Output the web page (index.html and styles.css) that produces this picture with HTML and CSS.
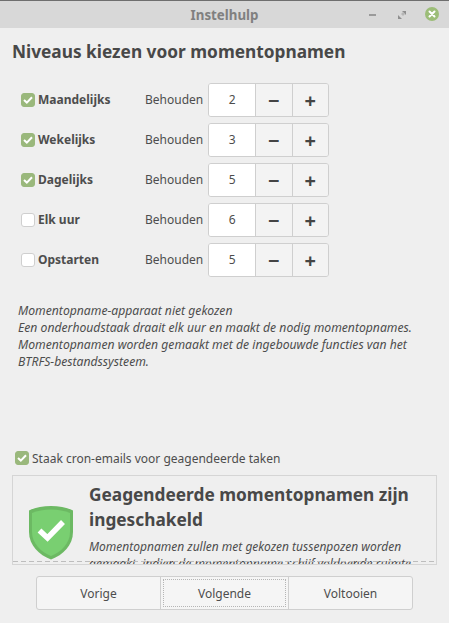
FILE: index.html
```html
<!DOCTYPE html>
<html lang="nl">
<head>
<meta charset="utf-8">
<title>Instelhulp</title>
<link rel="stylesheet" href="styles.css">
</head>
<body>
<div class="window">
  <header class="titlebar">
    <span class="title">Instelhulp</span>
    <svg class="wm wm-min" width="8" height="4" viewBox="0 0 8 4"><rect x="0" y="1" width="7" height="2" fill="#9a9a9a"/></svg>
    <svg class="wm wm-max" width="8" height="8" viewBox="0 0 8 8"><path d="M4 0h4v4zM0 4l4 4H0z" fill="#8f8f8f"/><path d="M3 3L5 1l2 2-2 2z" fill="#b5b5b5"/></svg>
    <svg class="wm wm-close" width="14" height="14" viewBox="0 0 14 14"><circle cx="7" cy="7" r="7" fill="#9cbd78"/><path d="M4.500 4.500l5 5M9.500 4.500l-5 5" stroke="#fff" stroke-width="2" stroke-linecap="round"/></svg>
  </header>
  <main class="content">
    <h1 class="heading">Niveaus kiezen voor momentopnamen</h1>
    <div class="rows">
      <div class="row">
        <label class="level"><span class="check on"><svg width="10" height="8" viewBox="0 0 10 8"><path d="M1 4l2.800 2.600L9 1.200" fill="none" stroke="#fff" stroke-width="2"/></svg></span><b>Maandelijks</b></label>
        <span class="keep">Behouden</span>
        <div class="spin"><span class="val">2</span><span class="sbtn">&minus;</span><span class="sbtn">+</span></div>
      </div>
      <div class="row">
        <label class="level"><span class="check on"><svg width="10" height="8" viewBox="0 0 10 8"><path d="M1 4l2.800 2.600L9 1.200" fill="none" stroke="#fff" stroke-width="2"/></svg></span><b>Wekelijks</b></label>
        <span class="keep">Behouden</span>
        <div class="spin"><span class="val">3</span><span class="sbtn">&minus;</span><span class="sbtn">+</span></div>
      </div>
      <div class="row">
        <label class="level"><span class="check on"><svg width="10" height="8" viewBox="0 0 10 8"><path d="M1 4l2.800 2.600L9 1.200" fill="none" stroke="#fff" stroke-width="2"/></svg></span><b>Dagelijks</b></label>
        <span class="keep">Behouden</span>
        <div class="spin"><span class="val">5</span><span class="sbtn">&minus;</span><span class="sbtn">+</span></div>
      </div>
      <div class="row">
        <label class="level"><span class="check"></span><b>Elk uur</b></label>
        <span class="keep">Behouden</span>
        <div class="spin"><span class="val">6</span><span class="sbtn">&minus;</span><span class="sbtn">+</span></div>
      </div>
      <div class="row">
        <label class="level"><span class="check"></span><b>Opstarten</b></label>
        <span class="keep">Behouden</span>
        <div class="spin"><span class="val">5</span><span class="sbtn">&minus;</span><span class="sbtn">+</span></div>
      </div>
    </div>
    <p class="info">Momentopname-apparaat niet gekozen<br>Een onderhoudstaak draait elk uur en maakt de nodig momentopnames.<br>Momentopnamen worden gemaakt met de ingebouwde functies van het<br>BTRFS-bestandssysteem.</p>
    <label class="cron"><span class="check on"><svg width="10" height="8" viewBox="0 0 10 8"><path d="M1 4l2.800 2.600L9 1.200" fill="none" stroke="#fff" stroke-width="2"/></svg></span>Staak cron-emails voor geagendeerde taken</label>
    <section class="status">
      <svg class="shield" width="46" height="54" viewBox="0 0 46 54">
        <path d="M23 0C31 0 39 1.500 45 4.500V26C45 39 35 49 23 53.500 11 49 1 39 1 26V4.500C7 1.500 15 0 23 0z" fill="#6cb963"/>
        <path d="M23 3.500C30 3.500 37 4.800 42 7V26C42 37.500 33 46 23 50 13 46 4 37.500 4 26V7C9 4.800 16 3.500 23 3.500z" fill="#79cf71"/>
        <path d="M11.500 24.500l8 7.500L35 16" fill="none" stroke="#fff" stroke-width="5.500"/>
      </svg>
      <div class="status-text">
        <h2 class="status-title">Geagendeerde momentopnamen zijn ingeschakeld</h2>
        <p class="status-desc">Momentopnamen zullen met gekozen tussenpozen worden gemaakt, indien de momentopname-schijf voldoende ruimte heeft.</p>
      </div>
      <div class="dash"></div>
    </section>
    <div class="nav">
      <span class="navbtn">Vorige</span>
      <span class="navbtn focus"><span class="focus-ring">Volgende</span></span>
      <span class="navbtn">Voltooien</span>
    </div>
  </main>
</div>
</body>
</html>
```
FILE: styles.css
```css
* { box-sizing: border-box; }
html, body { margin: 0; padding: 0; }
body {
  width: 449px;
  height: 623px;
  overflow: hidden;
  background: #efefef;
  font-family: "Noto Sans", sans-serif;
  font-size: 12px;
  color: #4d4d4d;
}
.window { height: 623px; display: flex; flex-direction: column; }
.titlebar {
  height: 28px;
  flex: none;
  background: #d8d8d8;
  border-top: 1px solid #6e6e6e;
  display: flex;
  align-items: center;
  position: relative;
}
.title {
  width: 100%;
  text-align: center;
  font-weight: 700;
  font-size: 13.300px;
  color: #808080;
}
.wm { position: absolute; }
.wm-min { left: 369px; top: 12px; }
.wm-max { left: 398px; top: 10px; }
.wm-close { left: 425px; top: 6px; }
.content {
  flex: 1;
  padding: 0 12px;
  display: flex;
  flex-direction: column;
  min-height: 0;
}
.heading {
  margin: 12px 0 0;
  font-size: 17.280px;
  line-height: 24px;
  font-weight: 700;
  color: #484848;
}
.rows {
  margin-top: 19px;
  display: flex;
  flex-direction: column;
  gap: 6px;
}
.row { height: 34px; display: flex; align-items: center; padding-left: 9px; }
.level { width: 124px; display: flex; align-items: center; gap: 3px; }
.level b { font-weight: 700; padding-bottom: 2px; }
.keep { width: 63px; padding-bottom: 2px; }
.check {
  width: 14px;
  height: 14px;
  flex: none;
  border-radius: 3px;
  background: #fff;
  border: 1px solid #cfcfcf;
  display: flex;
  align-items: center;
  justify-content: center;
}
.check.on { background: #9ab87c; border-color: #9ab87c; }
.spin {
  width: 121px;
  height: 34px;
  display: flex;
  border: 1px solid #cfcfcf;
  border-radius: 3px;
  overflow: hidden;
}
.val {
  width: 47px;
  padding-bottom: 2px;
  background: #fff;
  display: flex;
  align-items: center;
  justify-content: center;
}
.sbtn {
  width: 37px;
  background: #f3f3f3;
  border-left: 1px solid #cfcfcf;
  display: flex;
  align-items: center;
  justify-content: center;
  font-size: 20px;
  font-weight: 700;
  color: #444;
}
.info {
  margin: 25px 0 0 6px;
  font-size: 12.180px;
  line-height: 17px;
  font-style: italic;
}
.cron {
  margin-top: 79px;
  padding-left: 3px;
  display: flex;
  align-items: center;
  gap: 3px;
  height: 18px;
}
.status {
  margin-top: 8px;
  height: 90px;
  flex: none;
  border: 1px solid #d5d5d5;
  display: flex;
  overflow: hidden;
  position: relative;
}
.shield { flex: none; margin: 30px 0 0 15px; }
.status-text { margin-left: 15px; width: 335px; }
.status-title {
  margin: 6px 0 0;
  font-size: 17.280px;
  line-height: 25px;
  font-weight: 700;
  color: #484848;
}
.status-desc {
  margin: 6px 0 0;
  font-size: 12px;
  line-height: 17px;
  font-style: italic;
}
.dash {
  position: absolute;
  left: 0;
  right: 0;
  bottom: 2px;
  height: 1px;
  background: repeating-linear-gradient(90deg, #bdbdbd 0 5px, transparent 5px 8px);
}
.nav {
  margin: 11px auto 0;
  width: 377px;
  height: 34px;
  display: flex;
  border: 1px solid #cfcfcf;
  border-radius: 3px;
  background: #f5f5f5;
}
.navbtn {
  flex: 1;
  display: flex;
  align-items: center;
  justify-content: center;
}
.navbtn + .navbtn { border-left: 1px solid #cfcfcf; }
.focus { padding: 2px; }
.focus-ring {
  width: 100%;
  height: 100%;
  display: flex;
  align-items: center;
  justify-content: center;
  border: 1px dotted #b5b5b5;
}
```
